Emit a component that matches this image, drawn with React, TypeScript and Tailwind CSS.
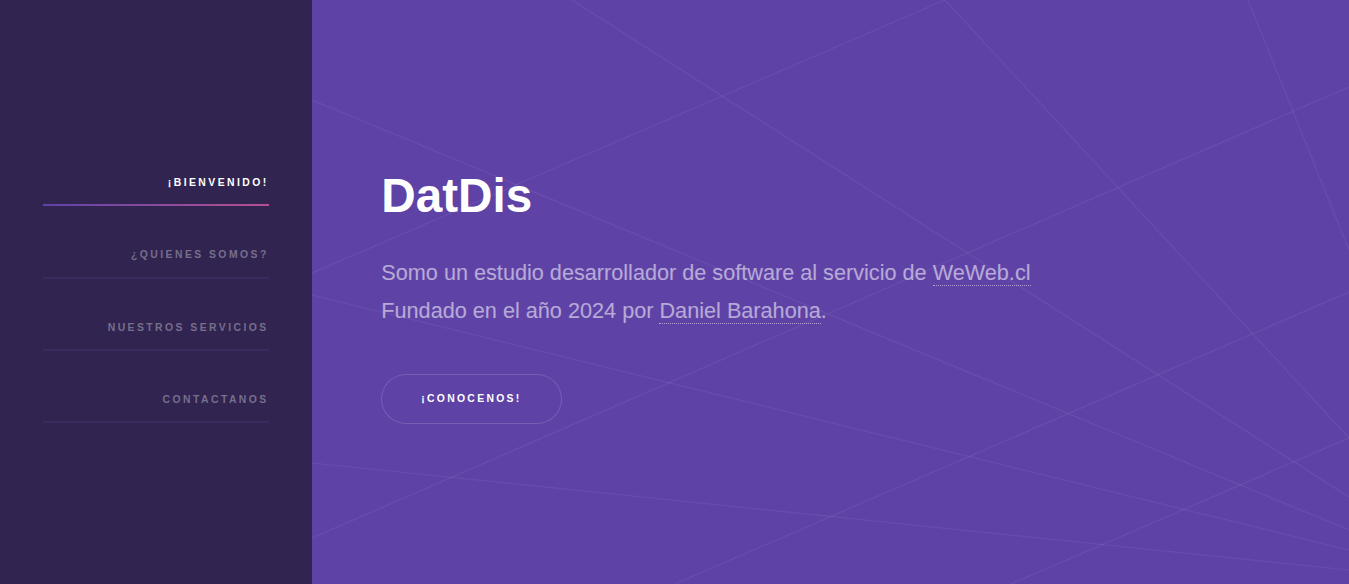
import React from "react";

const items = [
  { label: "¡Bienvenido!", active: true },
  { label: "¿Quienes somos?", active: false },
  { label: "Nuestros servicios", active: false },
  { label: "Contactanos", active: false },
];

const lines: [number, number, number, number][] = [
  [260, 0, 1037, 497],
  [633, 0, 0, 273],
  [633, 0, 1037, 438],
  [936, 0, 1037, 250],
  [0, 100, 1037, 530],
  [0, 295, 1037, 550],
  [0, 463, 1037, 570],
  [0, 538, 1037, 87],
  [363, 584, 1037, 292],
  [699, 584, 1037, 438],
];

export default function App() {
  return (
    <div className="flex h-[584px] w-full overflow-hidden font-['Liberation_Sans',Arial,Helvetica,sans-serif]">
      <aside className="w-[312px] shrink-0 bg-[#312450] px-[43.3px] pt-[160.2px]">
        <nav>
          <ul>
            {items.map((it) => (
              <li key={it.label} className="pb-[26px]">
                <a
                  href="#"
                  className={`relative block py-[14.04px] text-right text-[10.4px] font-bold uppercase leading-[1.75] tracking-[0.235em] ${
                    it.active ? "text-white" : "text-white/35"
                  }`}
                >
                  {it.label}
                  <span
                    className={`absolute bottom-0 left-0 h-[2.08px] w-full ${
                      it.active
                        ? "bg-gradient-to-r from-[#5e42a6] to-[#b74e91]"
                        : "bg-[#3a2b5f]"
                    }`}
                  />
                </a>
              </li>
            ))}
          </ul>
        </nav>
      </aside>
      <main className="relative flex-1 overflow-hidden bg-[#5e42a6]">
        <svg
          className="pointer-events-none absolute inset-0 h-full w-full"
          viewBox="0 0 1037 584"
          preserveAspectRatio="none"
        >
          {lines.map(([x1, y1, x2, y2], i) => (
            <line
              key={i}
              x1={x1}
              y1={y1}
              x2={x2}
              y2={y2}
              stroke="rgba(255,255,255,0.065)"
              strokeWidth={1.2}
            />
          ))}
        </svg>
        <div className="relative pl-[69.3px] pt-[164.5px]">
          <h1 className="mb-[28px] text-[47.67px] font-bold leading-[1.3] text-white">
            DatDis
          </h1>
          <p className="mb-[43.3px] text-[21.67px] leading-[1.75] text-white/55">
            Somo un estudio desarrollador de software al servicio de{" "}
            <a href="#" className="border-b border-dotted border-white/50">
              WeWeb.cl
            </a>
            <br />
            Fundado en el año 2024 por{" "}
            <a href="#" className="border-b border-dotted border-white/50">
              Daniel Barahona
            </a>
            .
          </p>
          <a
            href="#"
            className="inline-flex h-[50.6px] items-center rounded-full pl-[40px] pr-[40.5px] text-[10.4px] font-bold uppercase tracking-[0.22em] text-white shadow-[inset_0_0_0_1px_rgba(255,255,255,0.15)]"
          >
            ¡Conocenos!
          </a>
        </div>
      </main>
    </div>
  );
}
